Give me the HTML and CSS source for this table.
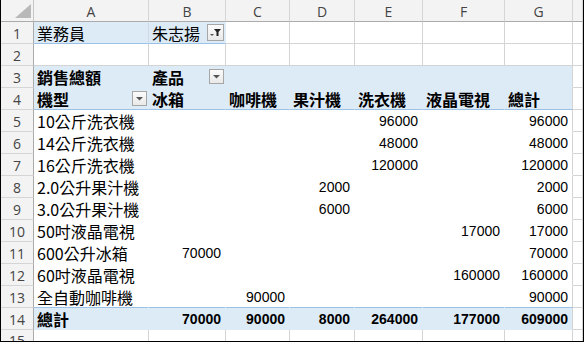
FILE: index.html
```html
<!DOCTYPE html>
<html lang="zh-Hant">
<head>
<meta charset="utf-8">
<title>樞紐分析表</title>
<link rel="stylesheet" href="styles.css">
</head>
<body>
<div class="sheet">
  <div class="corner"><svg width="16" height="14" viewBox="0 0 16 14"><polygon points="16,0 16,14 0,14" fill="#b9b9b9"/></svg></div>
  <div class="ch">A</div><div class="ch">B</div><div class="ch">C</div><div class="ch">D</div><div class="ch">E</div><div class="ch">F</div><div class="ch">G</div><div class="ch"></div>

  <div class="rh">1</div>
  <div class="c f1 gl">業務員</div>
  <div class="c f1">朱志揚<span class="btn"><svg width="15" height="15" viewBox="0 0 15 15"><polygon points="2,9 6,9 4,11" fill="#555"/><polygon points="6,4 13,4 10.5,7 10.5,11 8.5,11 8.5,7" fill="#222"/></svg></span></div>
  <div class="c"></div><div class="c"></div><div class="c"></div><div class="c"></div><div class="c"></div><div class="c"></div>

  <div class="rh">2</div>
  <div class="c"></div><div class="c"></div><div class="c"></div><div class="c"></div><div class="c"></div><div class="c"></div><div class="c"></div><div class="c"></div>

  <div class="rh">3</div>
  <div class="c pb b">銷售總額</div>
  <div class="c pb b">產品<span class="btn dd"><svg width="13" height="13" viewBox="0 0 13 13"><polygon points="3,5 10,5 6.5,8.5" fill="#555"/></svg></span></div>
  <div class="c pb"></div><div class="c pb"></div><div class="c pb"></div><div class="c pb"></div><div class="c pb last"></div><div class="c"></div>

  <div class="rh">4</div>
  <div class="c pb b line">機型<span class="btn dd"><svg width="13" height="13" viewBox="0 0 13 13"><polygon points="3,5 10,5 6.5,8.5" fill="#555"/></svg></span></div>
  <div class="c pb b line">冰箱</div>
  <div class="c pb b line">咖啡機</div>
  <div class="c pb b line">果汁機</div>
  <div class="c pb b line">洗衣機</div>
  <div class="c pb b line">液晶電視</div>
  <div class="c pb b line last">總計</div>
  <div class="c"></div>

  <div class="rh">5</div>
  <div class="c pw">10公斤洗衣機</div><div class="c pw"></div><div class="c pw"></div><div class="c pw"></div><div class="c pw n">96000</div><div class="c pw"></div><div class="c pw n last">96000</div><div class="c"></div>

  <div class="rh">6</div>
  <div class="c pw">14公斤洗衣機</div><div class="c pw"></div><div class="c pw"></div><div class="c pw"></div><div class="c pw n">48000</div><div class="c pw"></div><div class="c pw n last">48000</div><div class="c"></div>

  <div class="rh">7</div>
  <div class="c pw">16公斤洗衣機</div><div class="c pw"></div><div class="c pw"></div><div class="c pw"></div><div class="c pw n">120000</div><div class="c pw"></div><div class="c pw n last">120000</div><div class="c"></div>

  <div class="rh">8</div>
  <div class="c pw">2.0公升果汁機</div><div class="c pw"></div><div class="c pw"></div><div class="c pw n">2000</div><div class="c pw"></div><div class="c pw"></div><div class="c pw n last">2000</div><div class="c"></div>

  <div class="rh">9</div>
  <div class="c pw">3.0公升果汁機</div><div class="c pw"></div><div class="c pw"></div><div class="c pw n">6000</div><div class="c pw"></div><div class="c pw"></div><div class="c pw n last">6000</div><div class="c"></div>

  <div class="rh">10</div>
  <div class="c pw">50吋液晶電視</div><div class="c pw"></div><div class="c pw"></div><div class="c pw"></div><div class="c pw"></div><div class="c pw n">17000</div><div class="c pw n last">17000</div><div class="c"></div>

  <div class="rh">11</div>
  <div class="c pw">600公升冰箱</div><div class="c pw n">70000</div><div class="c pw"></div><div class="c pw"></div><div class="c pw"></div><div class="c pw"></div><div class="c pw n last">70000</div><div class="c"></div>

  <div class="rh">12</div>
  <div class="c pw">60吋液晶電視</div><div class="c pw"></div><div class="c pw"></div><div class="c pw"></div><div class="c pw"></div><div class="c pw n">160000</div><div class="c pw n last">160000</div><div class="c"></div>

  <div class="rh">13</div>
  <div class="c pw line">全自動咖啡機</div><div class="c pw line"></div><div class="c pw line n">90000</div><div class="c pw line"></div><div class="c pw line"></div><div class="c pw line"></div><div class="c pw line n last">90000</div><div class="c"></div>

  <div class="rh">14</div>
  <div class="c pb b">總計</div><div class="c pb n b">70000</div><div class="c pb n b">90000</div><div class="c pb n b">8000</div><div class="c pb n b">264000</div><div class="c pb n b">177000</div><div class="c pb n b last">609000</div><div class="c"></div>

  <div class="rh">15</div>
  <div class="c"></div><div class="c"></div><div class="c"></div><div class="c"></div><div class="c"></div><div class="c"></div><div class="c"></div><div class="c"></div>
</div>
</body>
</html>
```
FILE: styles.css
```css
* { box-sizing: border-box; }
html, body { margin: 0; padding: 0; background: #fff; }
.sheet {
  width: 584px;
  height: 342px;
  overflow: hidden;
  border-left: 1px solid #000;
  border-right: 1px solid #000;
  border-bottom: 1px solid #000;
  display: grid;
  grid-template-columns: 33px 115px 77px 64px 65px 68px 82px 68px 1fr;
  grid-template-rows: 22px repeat(14, 22px) 1fr;
  font-family: "Liberation Sans", "Noto Sans CJK TC", sans-serif;
}
.corner {
  background: #f3f3f3;
  border-right: 1px solid #c6c6c6;
  border-bottom: 1px solid #ababab;
  display: flex;
  align-items: flex-end;
  justify-content: flex-end;
  padding: 0 2px 3px 0;
}
.corner svg { display: block; }
.ch {
  background: #f3f3f3;
  border-right: 1px solid #d5d5d5;
  border-bottom: 1px solid #ababab;
  color: #444;
  font-family: "Open Sans", "Liberation Sans", sans-serif;
  font-size: 14px;
  display: flex;
  align-items: center;
  justify-content: center;
  padding-top: 1px;
}
.rh {
  background: #f3f3f3;
  border-right: 1px solid #ababab;
  border-bottom: 1px solid #d5d5d5;
  color: #444;
  font-family: "Open Sans", "Liberation Sans", sans-serif;
  font-size: 14px;
  display: flex;
  align-items: center;
  justify-content: center;
  padding-top: 1px;
}
.c {
  border-right: 1px solid #d4d4d4;
  border-bottom: 1px solid #d4d4d4;
  display: flex;
  align-items: flex-end;
  padding: 0 3px 0 3px;
  font-family: "Noto Sans CJK TC", sans-serif;
  font-size: 16px;
  line-height: 20px;
  color: #000;
  white-space: nowrap;
  overflow: hidden;
}
.f1 { background: #ddebf7; border-right-color: #ddebf7; border-bottom-color: #9bc2e6; }
.f1.gl { border-right-color: #d0dbe6; }
.pb { background: #ddebf7; border-right-color: #ddebf7; border-bottom-color: #ddebf7; }
.pw { background: #fff; border-right-color: #fff; border-bottom-color: #fff; }
.pb.line, .pw.line { border-bottom-color: #9bc2e6; }
.last { border-right-color: #d4d4d4; }
.b { font-weight: 700; }
.n {
  justify-content: flex-end;
  font-family: "Liberation Sans", sans-serif;
  font-size: 14px;
  line-height: 18px;
  padding-right: 4px;
  padding-bottom: 1px;
}
.n.b { font-weight: 700; }
.btn {
  margin-left: auto;
  margin-right: -2px;
  margin-bottom: 2px;
  width: 17px;
  height: 17px;
  border: 1px solid #a6a6a6;
  background: linear-gradient(#fbfbfb, #e9e9e9);
  display: flex;
  align-items: center;
  justify-content: center;
  flex: none;
}
.btn.dd { width: 15px; height: 15px; margin-bottom: 3px; }
.btn svg { display: block; }
```
